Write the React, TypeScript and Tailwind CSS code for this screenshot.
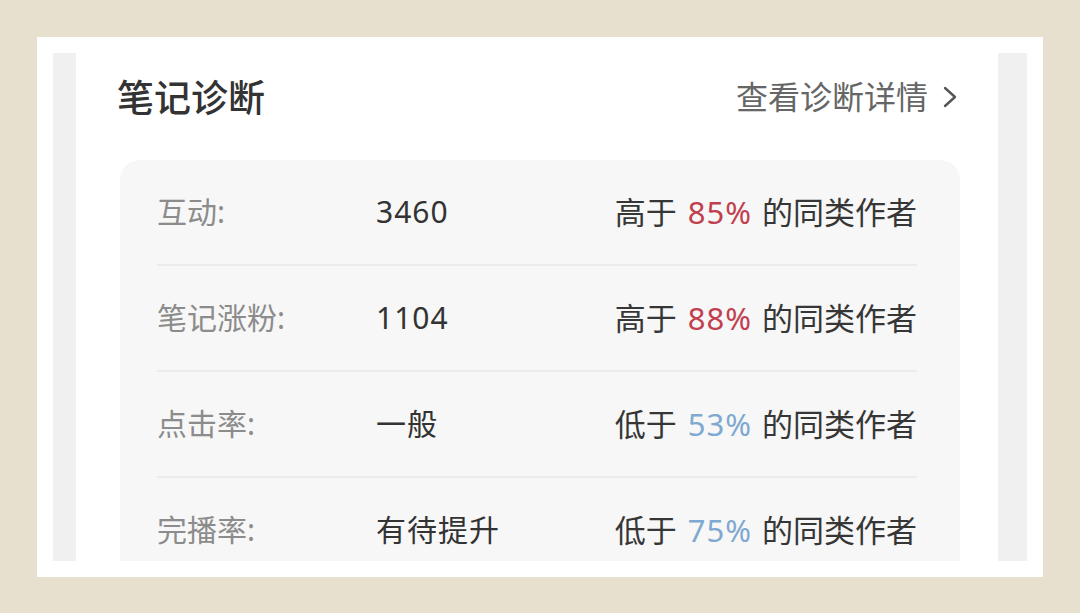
type Row = {
  label: string;
  value: string;
  compare: string;
  percent: string;
  tone: 'up' | 'down';
};

const rows: Row[] = [
  { label: '互动:', value: '3460', compare: '高于', percent: '85%', tone: 'up' },
  { label: '笔记涨粉:', value: '1104', compare: '高于', percent: '88%', tone: 'up' },
  { label: '点击率:', value: '一般', compare: '低于', percent: '53%', tone: 'down' },
  { label: '完播率:', value: '有待提升', compare: '低于', percent: '75%', tone: 'down' },
];

const font = { fontFamily: '"Noto Sans", "Noto Sans CJK SC", sans-serif' };

function DiagnosisRow({ row }: { row: Row }) {
  return (
    <div className="flex h-[106px] shrink-0 items-center border-b-2 border-[#ebebeb] text-[30px] leading-none">
      <span className="w-[219px] text-[#8c8c8c]">{row.label}</span>
      <span className="tracking-[1px] text-[#333333]">{row.value}</span>
      <span className="ml-auto flex items-center text-[31px] text-[#363636]">
        <span>{row.compare}</span>
        <span
          className={
            row.tone === 'up'
              ? 'ml-[11px] mr-[10px] tracking-[1px] text-[#c1404f]'
              : 'ml-[11px] mr-[10px] tracking-[1px] text-[#7fa9d0]'
          }
        >
          {row.percent}
        </span>
        <span>的同类作者</span>
      </span>
    </div>
  );
}

export default function App() {
  return (
    <div className="h-[613px] w-[1080px] bg-[#e7e0cf] pl-[37px] pt-[37px]" style={font}>
      <div className="h-[540px] w-[1006px] bg-white p-4">
        <div className="flex h-full overflow-hidden">
          <div className="w-[23px] shrink-0 bg-[#f0f0f0]" />
          <div className="flex flex-1 flex-col bg-white">
            <div className="flex h-[88px] shrink-0 items-center justify-between pl-[41px] pr-[40px]">
              <h1 className="text-[37px] font-medium leading-none text-[#333333]">笔记诊断</h1>
              <div className="flex items-center gap-[14px] text-[32px] leading-none text-[#666666]">
                <span>查看诊断详情</span>
                {/* chevron */}
                <svg width="16" height="22" viewBox="0 0 16 22" fill="none">
                  <path d="M3 2 L13 11 L3 20" stroke="#555555" strokeWidth="2.4" strokeLinecap="round" strokeLinejoin="round" />
                </svg>
              </div>
            </div>
            <div className="ml-[44px] mr-[38px] mt-[19px] flex flex-1 flex-col rounded-t-[20px] bg-[#f7f7f7] pl-[37px] pr-[43px]">
              {rows.map((row) => (
                <DiagnosisRow key={row.label} row={row} />
              ))}
            </div>
          </div>
          <div className="w-[29px] shrink-0 bg-[#f0f0f0]" />
        </div>
      </div>
    </div>
  );
}
